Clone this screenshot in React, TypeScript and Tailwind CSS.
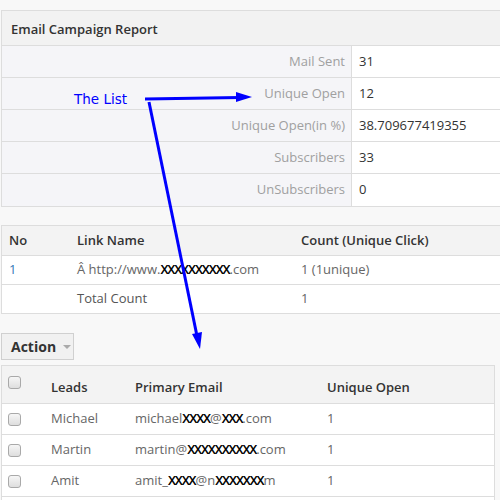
import React from "react";

const X = ({ n }: { n: string }) => (
  <span className="inline-block font-normal text-black tracking-[-0.6px] [text-shadow:0.5px_0_0_#000]">{n}</span>
);

function Checkbox() {
  return <span className="inline-block w-[13px] h-[13px] rounded-[3px] border border-[#a9a9a9] bg-gradient-to-b from-[#f6f6f6] to-[#dedede]" />;
}

export default function App() {
  const rows1 = [
    ["Mail Sent", "31"],
    ["Unique Open", "12"],
    ["Unique Open(in %)", "38.709677419355"],
    ["Subscribers", "33"],
    ["UnSubscribers", "0"],
  ];
  return (
    <div
      className="relative w-[500px] h-[500px] overflow-hidden bg-[#f8f8f8] text-[13px] text-[#666]"
      style={{ fontFamily: '"Open Sans", "DejaVu Sans", sans-serif' }}
    >
      <div className="pt-[10px] pl-[1px] w-[520px]">
        {/* Panel 1 */}
        <div className="border border-[#dddddd] bg-white">
          <div className="h-[35px] flex items-center pt-[3px] pl-[9px] bg-[#f2f2f2] border-b border-[#dddddd] text-[#333] font-semibold">
            Email Campaign Report
          </div>
          {rows1.map(([k, v], i) => (
            <div key={k} className={`flex h-[32px] ${i < 4 ? "border-b border-[#dddddd]" : ""}`}>
              <div className="w-[349px] bg-[#f5f5f8] flex items-center justify-end pr-[6px] text-[#a0a0a0]">{k}</div>
              <div className="flex-1 border-l border-[#dddddd] flex items-center pl-[7px] text-[#333]">{v}</div>
            </div>
          ))}
        </div>

        {/* Table 2 */}
        <div className="mt-[18px] border border-[#dddddd] bg-white">
          <div className="flex h-[30px] items-center bg-[#f3f3f3] border-b border-[#dddddd] font-semibold text-[#333]">
            <div className="w-[75px] pl-[7px]">No</div>
            <div className="w-[224px]">Link Name</div>
            <div>Count (Unique Click)</div>
          </div>
          <div className="flex h-[29px] items-center border-b border-[#dddddd]">
            <div className="w-[75px] pl-[7px] text-[#337ab7]">1</div>
            <div className="w-[224px] whitespace-nowrap">
              Â http://www.<X n="XXXXXXXXXX" />
              <span>.com</span>
            </div>
            <div>1 (1unique)</div>
          </div>
          <div className="flex h-[28px] items-center">
            <div className="w-[75px] pl-[7px]"></div>
            <div className="w-[224px] text-[#555]">Total Count</div>
            <div>1</div>
          </div>
        </div>

        {/* Action button */}
        <div className="mt-[19px] flex">
          <div className="h-[27px] w-[73px] flex items-center pl-[9px] gap-[7px] border border-[#d0d0d0] bg-[#f1f1f1] text-[14px] font-bold text-[#333]">
            Action
            <span className="w-0 h-0 border-l-[4px] border-r-[4px] border-t-[4px] border-l-transparent border-r-transparent border-t-[#aaa]" />
          </div>
        </div>

        {/* Table 3 */}
        <div className="mt-[5px] w-[494px] border border-[#dddddd] bg-white">
          <div className="relative flex h-[38px] items-end pb-[6px] bg-[#f3f3f3] border-b border-[#dddddd] font-semibold text-[#333]">
            <div className="w-[49px] pl-[6px] self-center mt-[1px] flex items-center"><Checkbox /></div>
            <div className="w-[84px]">Leads</div>
            <div className="w-[192px]">Primary Email</div>
            <div>Unique Open</div>
          </div>
          {[
            ["Michael", <>michael<X n="XXXX" />@<X n="XXX" />.com</>, "1"],
            ["Martin", <>martin@<X n="XXXXXXXXXX" />.com</>, "1"],
            ["Amit", <>amit_<X n="XXXX" />@n<X n="XXXXXXX" />m</>, "1"],
          ].map(([name, email, v], i) => (
            <div key={i} className="flex h-[31px] items-center border-b border-[#dddddd]">
              <div className="w-[49px] pl-[6px] flex items-center"><Checkbox /></div>
              <div className="w-[84px]">{name}</div>
              <div className="w-[192px] whitespace-nowrap">{email}</div>
              <div>{v}</div>
            </div>
          ))}
          <div className="h-[31px]" />
        </div>
      </div>

      {/* Annotation overlay */}
      <div className="absolute left-[74px] top-[89px] text-[13.5px] text-[#0000ff]" style={{ fontFamily: '"DejaVu Sans", sans-serif' }}>
        The List
      </div>
      <svg className="absolute inset-0 pointer-events-none" width="500" height="500" viewBox="0 0 500 500">
        <line x1="145" y1="99" x2="240" y2="97.5" stroke="#0000ff" strokeWidth="3" />
        <polygon points="252,97 236,92 236,102" fill="#0000ff" />
        <line x1="149" y1="102" x2="197" y2="336" stroke="#0000ff" strokeWidth="3" />
        <polygon points="200,349 192,334 202,332" fill="#0000ff" />
      </svg>
    </div>
  );
}
